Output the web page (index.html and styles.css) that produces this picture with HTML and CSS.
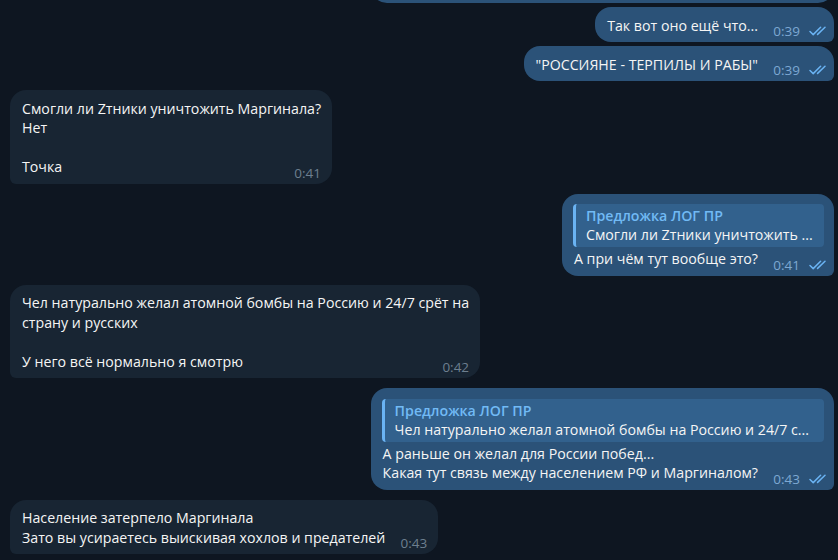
FILE: index.html
```html
<!DOCTYPE html>
<html lang="ru">
<head>
<meta charset="utf-8">
<title>Chat</title>
<link rel="stylesheet" href="styles.css">
</head>
<body>
<div class="chat">
  <div class="row out gap-none"><div class="bubble out cut"></div></div>

  <div class="row out gap-s">
    <div class="bubble out grp-top">
      <div class="text">Так вот оно ещё что...<span class="spacer out"></span></div>
      <div class="meta"><span class="time">0:39</span><svg class="checks" viewBox="0 0 19 10" width="19" height="10"><path d="M1 5.5 L4.2 8.6 L11.6 1.2 M8.6 8.4 L16 1.2" fill="none" stroke="currentColor" stroke-width="1.5" stroke-linecap="round" stroke-linejoin="round"/></svg></div>
    </div>
  </div>

  <div class="row out gap-s">
    <div class="bubble out tail">
      <div class="text">"РОССИЯНЕ - ТЕРПИЛЫ И РАБЫ"<span class="spacer out"></span></div>
      <div class="meta"><span class="time">0:39</span><svg class="checks" viewBox="0 0 19 10" width="19" height="10"><path d="M1 5.5 L4.2 8.6 L11.6 1.2 M8.6 8.4 L16 1.2" fill="none" stroke="currentColor" stroke-width="1.5" stroke-linecap="round" stroke-linejoin="round"/></svg></div>
    </div>
  </div>

  <div class="row in gap-m">
    <div class="bubble in tail">
      <div class="text">Смогли ли Zтники уничтожить Маргинала?<br>Нет<br><br>Точка<span class="spacer in"></span></div>
      <div class="meta"><span class="time">0:41</span></div>
    </div>
  </div>

  <div class="row out gap-l">
    <div class="bubble out tail">
      <div class="reply">
        <div class="reply-name">Предложка ЛОГ ПР</div>
        <div class="reply-text">Смогли ли Zтники уничтожить ...</div>
      </div>
      <div class="body">
        <div class="text">А при чём тут вообще это?<span class="spacer out"></span></div>
        <div class="meta"><span class="time">0:41</span><svg class="checks" viewBox="0 0 19 10" width="19" height="10"><path d="M1 5.5 L4.2 8.6 L11.6 1.2 M8.6 8.4 L16 1.2" fill="none" stroke="currentColor" stroke-width="1.5" stroke-linecap="round" stroke-linejoin="round"/></svg></div>
      </div>
    </div>
  </div>

  <div class="row in gap-m">
    <div class="bubble in tail">
      <div class="text">Чел натурально желал атомной бомбы на Россию и 24/7 срёт на<br>страну и русских<br><br>У него всё нормально я смотрю<span class="spacer in"></span></div>
      <div class="meta"><span class="time">0:42</span></div>
    </div>
  </div>

  <div class="row out gap-l">
    <div class="bubble out tail">
      <div class="reply">
        <div class="reply-name">Предложка ЛОГ ПР</div>
        <div class="reply-text">Чел натурально желал атомной бомбы на Россию и 24/7 с...</div>
      </div>
      <div class="body">
        <div class="text">А раньше он желал для России побед...<br>Какая тут связь между населением РФ и Маргиналом?<span class="spacer out"></span></div>
        <div class="meta"><span class="time">0:43</span><svg class="checks" viewBox="0 0 19 10" width="19" height="10"><path d="M1 5.5 L4.2 8.6 L11.6 1.2 M8.6 8.4 L16 1.2" fill="none" stroke="currentColor" stroke-width="1.5" stroke-linecap="round" stroke-linejoin="round"/></svg></div>
      </div>
    </div>
  </div>

  <div class="row in gap-l">
    <div class="bubble in tail">
      <div class="text">Население затерпело Маргинала<br>Зато вы усираетесь выискивая хохлов и предателей<span class="spacer in"></span></div>
      <div class="meta"><span class="time">0:43</span></div>
    </div>
  </div>
</div>
</body>
</html>
```

FILE: styles.css
```css
* { box-sizing: border-box; }
html, body {
  margin: 0;
  padding: 0;
  background: #0e1621;
  height: 560px;
  overflow: hidden;
}
body {
  font-family: "Open Sans", "Noto Sans", sans-serif;
  font-size: 14.2px;
  color: #f5f5f5;
}
.chat {
  display: flex;
  flex-direction: column;
  padding: 0 4px 0 10px;
}
.row { display: flex; }
.row.out { justify-content: flex-end; }
.row.in { justify-content: flex-start; }
.gap-none { margin-top: -40px; }
.gap-s { margin-top: 4px; }
.gap-m { margin-top: 9px; }
.gap-l { margin-top: 10px; }

.bubble {
  border-radius: 16px;
  padding: 8.5px 11px 7px 12px;
  line-height: 19.5px;
}
.bubble.in { background: #182533; border-bottom-left-radius: 6px; }
.bubble.out { background: #2b5278; padding-right: 6px; }
.bubble.out.tail { border-bottom-right-radius: 6px; }
.bubble.out.grp-top { border-bottom-right-radius: 6px; }
.bubble.cut { width: 463px; height: 43px; }

.bubble, .body {
  display: grid;
}
.bubble > .reply { grid-area: 1 / 1; }
.bubble > .body { grid-area: 2 / 1; }
.bubble > .text, .bubble > .meta,
.body > .text, .body > .meta { grid-area: 1 / 1; }

.text { white-space: nowrap; }
.spacer { display: inline-block; height: 1px; }
.spacer.out { width: 70px; }
.spacer.in { width: 42px; }

.meta {
  justify-self: end;
  align-self: end;
  display: flex;
  align-items: center;
  gap: 9px;
  line-height: 16px;
  margin-bottom: -4px;
}
.time {
  font-size: 13.5px;
  color: #6d7f8f;
}
.bubble.out .time { color: #7da8d3; }
.checks { color: #6ab3f3; display: block; }

.reply {
  background: #32618d;
  border-left: 3px solid #6ab3f3;
  border-radius: 4px;
  padding: 2px 10px 3px 10px;
  margin: 2px 4px 2px -1px;
  line-height: 19px;
}
.reply-name {
  color: #71baf5;
  font-weight: 600;
}
.reply-text { white-space: nowrap; }
```
